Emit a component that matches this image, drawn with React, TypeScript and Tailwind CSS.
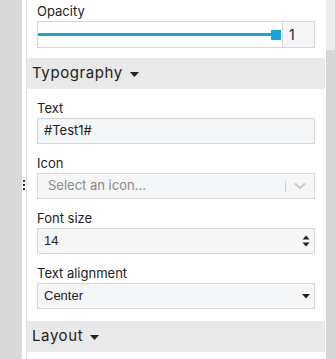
import React from "react";

const Caret = () => (
  <svg width="9" height="5" viewBox="0 0 9 5" className="ml-[7px] mt-[2px]">
    <path d="M0 0 L9 0 L4.5 5 Z" fill="#222" />
  </svg>
);

const Label = ({ children }: { children: React.ReactNode }) => (
  <div className="h-[18px] text-[13px] leading-[16px] text-[#222]">{children}</div>
);

const Header = ({ title }: { title: string }) => (
  <div className="h-[31px] bg-[#e9e9e9] flex items-center pl-[5px] text-[15px] tracking-[0.6px] text-[#222]">
    <span>{title}</span>
    <Caret />
  </div>
);

export default function App() {
  return (
    <div className="w-[335px] h-[359px] flex bg-white overflow-hidden" style={{ fontFamily: "Inter, 'Noto Sans', sans-serif" }}>
      <div className="w-[22px] bg-[#d9d9d9] shrink-0" />
      <div className="w-[4px] shrink-0 relative">
        <div className="absolute left-[1px] top-[180px] flex flex-col gap-[2px]">
          <div className="w-[2px] h-[2px] bg-[#333]" />
          <div className="w-[2px] h-[2px] bg-[#333]" />
          <div className="w-[2px] h-[2px] bg-[#333]" />
        </div>
      </div>
      <div className="w-px bg-[#dedede] shrink-0" />
      <div className="w-[298px] shrink-0 flex flex-col">
        <div className="px-[10px] pt-[3px] pb-[10px]">
          <Label>Opacity</Label>
          <div className="h-[27px] flex border border-[#d6d6d6]">
            <div className="flex-1 flex items-center pr-[1px] bg-white">
              <div className="flex-1 h-[3px] bg-[#12a5e2]" />
              <div className="w-[10px] h-[10px] bg-[#12a5e2]" />
            </div>
            <div className="w-[32px] border-l border-[#d6d6d6] bg-[#f5f6f8] flex items-center pl-[6px] text-[14px] text-[#222]">1</div>
          </div>
        </div>
        <Header title="Typography" />
        <div className="px-[10px] pt-[11px] pb-[12px] flex flex-col gap-[11px]">
          <div>
            <Label>Text</Label>
            <div className="h-[26px] border border-[#d6d6d6] bg-[#f5f6f8] flex items-center pl-[6px] text-[13px] text-[#222]">#Test1#</div>
          </div>
          <div>
            <Label>Icon</Label>
            <div className="h-[26px] border border-[#dcdcdc] bg-[#f5f6f8] flex items-center pl-[10px] text-[13px] text-[#8a8a8a]">
              <span className="flex-1">Select an icon...</span>
              <div className="w-px h-[11px] bg-[#cfcfcf]" />
              <svg width="12" height="8" viewBox="0 0 12 8" className="mx-[8px]">
                <path d="M1 1.5 L6 6 L11 1.5" stroke="#c8c8c8" strokeWidth="2" fill="none" />
              </svg>
            </div>
          </div>
          <div>
            <Label>Font size</Label>
            <div className="h-[26px] border border-[#d6d6d6] bg-[#f5f6f8] flex items-center pl-[6px] pr-[4px] text-[13px] text-[#222]" style={{ fontFamily: "'Liberation Sans', Arial, sans-serif" }}>
              <span className="flex-1">14</span>
              <svg width="8" height="12" viewBox="0 0 8 12">
                <path d="M0.5 4.5 L7.5 4.5 L4 0.5 Z" fill="#222" />
                <path d="M0.5 7.5 L7.5 7.5 L4 11.5 Z" fill="#222" />
              </svg>
            </div>
          </div>
          <div>
            <Label>Text alignment</Label>
            <div className="h-[26px] border border-[#d6d6d6] bg-[#f5f6f8] flex items-center pl-[6px] pr-[4px] text-[13px] text-[#222]" style={{ fontFamily: "'Liberation Sans', Arial, sans-serif" }}>
              <span className="flex-1">Center</span>
              <svg width="8" height="5" viewBox="0 0 8 5">
                <path d="M0 0 L8 0 L4 4.5 Z" fill="#222" />
              </svg>
            </div>
          </div>
        </div>
        <Header title="Layout" />
        <div className="flex-1" />
      </div>
      <div className="w-px bg-white shrink-0" />
      <div className="flex-1 flex flex-col bg-[#ececec]">
        <div className="h-[50px]" />
        <div className="flex-1 bg-[#d6d6d6]" />
      </div>
    </div>
  );
}
